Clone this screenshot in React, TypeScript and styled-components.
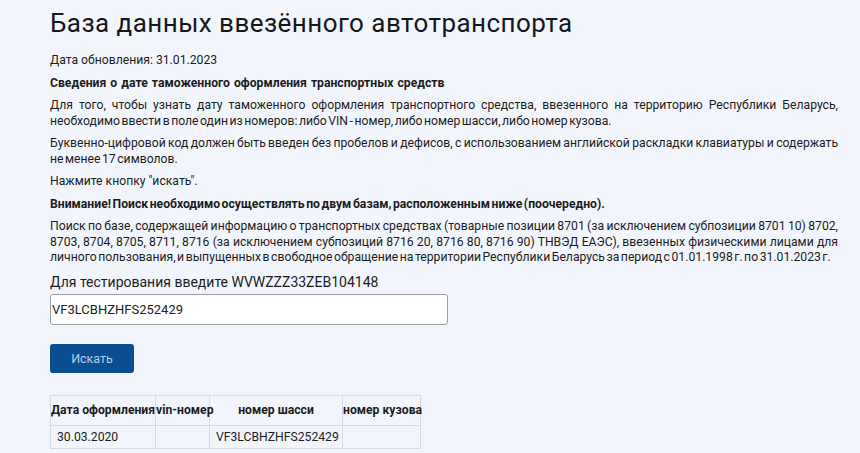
import React from "react";
import styled, { createGlobalStyle } from "styled-components";

const Global = createGlobalStyle`
  html, body { margin: 0; padding: 0; background: #f2f6fc; }
  body { font-family: Roboto, "Liberation Sans", Arial, sans-serif; color: #1c1c1c; }
  * { box-sizing: border-box; }
`;

const Page = styled.div`
  padding: 0 22px 0 50px;
  min-height: 453px;
`;

const Title = styled.h1`
  margin: 0;
  padding-top: 6px;
  font-family: Roboto, "Liberation Sans", sans-serif;
  font-weight: 400;
  font-size: 26px;
  line-height: 34px;
  color: #16171c;
  letter-spacing: 0.45px;
`;

const Para = styled.p<{ $bold?: boolean; $ws?: number }>`
  margin: 0 0 7px;
  font-size: 12.2px;
  line-height: 15.5px;
  text-align: justify;
  word-spacing: ${(p) => p.$ws ?? 0}px;
  font-weight: ${(p) => (p.$bold ? 700 : 400)};
`;

const Updated = styled(Para)`
  margin-top: 13px;
`;

const Label = styled.div`
  font-size: 14px;
  line-height: 17px;
  margin-top: 8px;
  margin-bottom: 3px;
`;

const Input = styled.input`
  display: block;
  width: 398px;
  height: 31px;
  border: 1px solid #9a9da3;
  border-radius: 3px;
  background: #fff;
  padding: 0 1px;
  font-family: Roboto, "Liberation Sans", sans-serif;
  font-size: 13px;
  color: #222;
  outline: none;
`;

const Button = styled.button`
  display: block;
  margin-top: 19px;
  width: 84px;
  height: 29px;
  border: none;
  border-radius: 3px;
  background: #0b4d91;
  color: #b3cff2;
  font-family: Roboto, "Liberation Sans", sans-serif;
  font-size: 12.5px;
  cursor: pointer;
`;

const Table = styled.table`
  margin-top: 22px;
  border-collapse: collapse;
  table-layout: fixed;
  width: 370px;
  font-size: 12.2px;
`;

const Col = styled.col<{ $w: number }>`
  width: ${(p) => p.$w}px;
`;

const Th = styled.th`
  height: 30px;
  border: 1px solid #d6dbe1;
  padding: 0;
  font-weight: 700;
  text-align: center;
  white-space: nowrap;
  overflow: visible;
`;

const Td = styled.td`
  height: 23px;
  border: 1px solid #d6dbe1;
  padding: 0 6px;
  white-space: nowrap;
`;

export default function App() {
  return (
    <>
      <Global />
      <Page>
        <Title>База данных ввезённого автотранспорта</Title>
        <Updated>Дата обновления: 31.01.2023</Updated>
        <Para $bold $ws={1}>Сведения о дате таможенного оформления транспортных средств</Para>
        <Para $ws={-1.5}>
          Для того, чтобы узнать дату таможенного оформления транспортного средства, ввезенного на территорию Республики Беларусь, необходимо ввести в поле один из номеров: либо VIN - номер, либо номер шасси, либо номер кузова.
        </Para>
        <Para $ws={-1.5}>
          Буквенно-цифровой код должен быть введен без пробелов и дефисов, с использованием английской раскладки клавиатуры и содержать не менее 17 символов.
        </Para>
        <Para>Нажмите кнопку "искать".</Para>
        <Para $bold $ws={-1.5}>Внимание! Поиск необходимо осуществлять по двум базам, расположенным ниже (поочередно).</Para>
        <Para $ws={-1.5}>
          Поиск по базе, содержащей информацию о транспортных средствах (товарные позиции 8701 (за исключением субпозиции 8701 10) 8702, 8703, 8704, 8705, 8711, 8716 (за исключением субпозиций 8716 20, 8716 80, 8716 90) ТНВЭД ЕАЭС), ввезенных физическими лицами для личного пользования, и выпущенных в свободное обращение на территории Республики Беларусь за период с 01.01.1998 г. по 31.01.2023 г.
        </Para>
        <Label>Для тестирования введите WVWZZZ33ZEB104148</Label>
        <Input defaultValue="VF3LCBHZHFS252429" />
        <Button>Искать</Button>
        <Table>
          <colgroup>
            <Col $w={105} />
            <Col $w={54} />
            <Col $w={133} />
            <Col $w={78} />
          </colgroup>
          <thead>
            <tr>
              <Th>Дата оформления</Th>
              <Th>vin-номер</Th>
              <Th>номер шасси</Th>
              <Th>номер кузова</Th>
            </tr>
          </thead>
          <tbody>
            <tr>
              <Td>30.03.2020</Td>
              <Td></Td>
              <Td>VF3LCBHZHFS252429</Td>
              <Td></Td>
            </tr>
          </tbody>
        </Table>
      </Page>
    </>
  );
}
